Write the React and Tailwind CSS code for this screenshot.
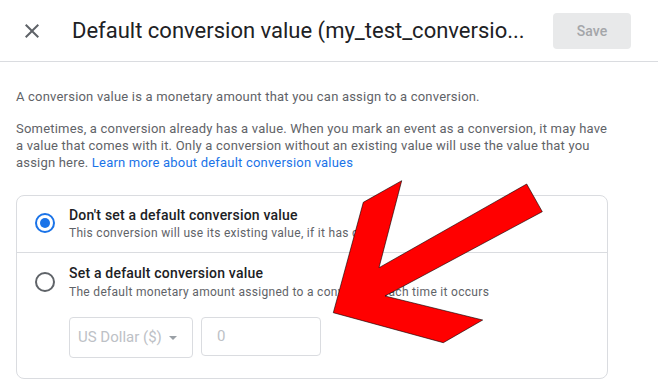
import React, { useState } from 'react';

const Radio = ({ checked }) => (
  <div
    className={`w-5 h-5 shrink-0 rounded-full border-2 flex items-center justify-center ${
      checked ? 'border-[#1a73e8]' : 'border-[#5f6368]'
    }`}
  >
    {checked && <div className="w-[10px] h-[10px] rounded-full bg-[#1a73e8]" />}
  </div>
);

const App = () => {
  const [choice, setChoice] = useState('none');

  return (
    <div className="relative w-[658px] h-[390px] overflow-hidden bg-white font-['Roboto','Liberation_Sans',sans-serif]">
      {/* Header */}
      <div className="flex items-center h-[62px] pl-5 pr-[27px] border-b border-[#dadce0]">
        <svg className="w-6 h-6 text-[#5f6368]" viewBox="0 0 24 24" fill="currentColor">
          <path d="M19 6.41L17.59 5 12 10.59 6.41 5 5 6.41 10.59 12 5 17.59 6.41 19 12 13.41 17.59 19 19 17.59 13.41 12z" />
        </svg>
        <h1 className="ml-7 flex-1 whitespace-nowrap text-[22px] text-[#202124]">
          Default conversion value (my_test_conversio...
        </h1>
        <button className="w-[78px] h-9 rounded bg-[#e8e9ea] text-sm font-medium text-[#a4a6a9]">
          Save
        </button>
      </div>

      {/* Body */}
      <div className="px-4 pt-[26px] text-[13px] leading-[17px] tracking-[0.2px] text-[#5f6368]">
        <p>A conversion value is a monetary amount that you can assign to a conversion.</p>
        <p className="mt-[15px]">
          Sometimes, a conversion already has a value. When you mark an event as a conversion, it may have
          <br />
          a value that comes with it. Only a conversion without an existing value will use the value that you
          <br />
          assign here. <a className="text-[#1a73e8]">Learn more about default conversion values</a>
        </p>

        <div className="mt-[24px] w-[592px] rounded-lg border border-[#dadce0]">
          <div
            className="flex items-center gap-[14px] pl-[18px] pt-[9px] pb-[11px] border-b border-[#dadce0]"
            onClick={() => setChoice('none')}
          >
            <Radio checked={choice === 'none'} />
            <div>
              <div className="text-sm leading-5 font-medium text-[#202124]">Don't set a default conversion value</div>
              <div className="text-[12px] leading-4 tracking-[0.3px]">This conversion will use its existing value, if it has one</div>
            </div>
          </div>

          <div className="pl-[18px] pt-[10px] pb-5" onClick={() => setChoice('set')}>
            <div className="flex items-center gap-[14px]">
              <Radio checked={choice === 'set'} />
              <div>
                <div className="text-sm leading-5 font-medium text-[#202124]">Set a default conversion value</div>
                <div className="mt-px text-[12px] leading-4 tracking-[0.3px]">The default monetary amount assigned to a conversion each time it occurs</div>
              </div>
            </div>
            <div className="flex items-start gap-2 mt-[17px] ml-[34px] text-[15px] tracking-normal text-[#bdc1c6]">
              <div className="flex items-center w-[124px] h-[41px] pl-2 rounded border border-[#dadce0]">
                <span>US Dollar ($)</span>
                <svg className="w-[8px] h-[4px] ml-[7px]" viewBox="0 0 10 5" fill="#9aa0a6">
                  <path d="M0 0l5 5 5-5z" />
                </svg>
              </div>
              <div className="flex items-center w-[120px] h-[39px] pl-[15px] rounded border border-[#dadce0]">0</div>
            </div>
          </div>
        </div>
      </div>

      {/* Annotation arrow */}
      <svg className="absolute inset-0 pointer-events-none" width="658" height="390" viewBox="0 0 658 390">
        <polygon
          points="401.7,180.7 379,267.7 526.7,184 542.3,211.7 385,296 482.7,320 443.3,342.7 333.3,312.7 363.3,202.3"
          fill="#ff0000"
          stroke="#000"
          strokeWidth="0.6"
        />
      </svg>
    </div>
  );
};

export default App;
